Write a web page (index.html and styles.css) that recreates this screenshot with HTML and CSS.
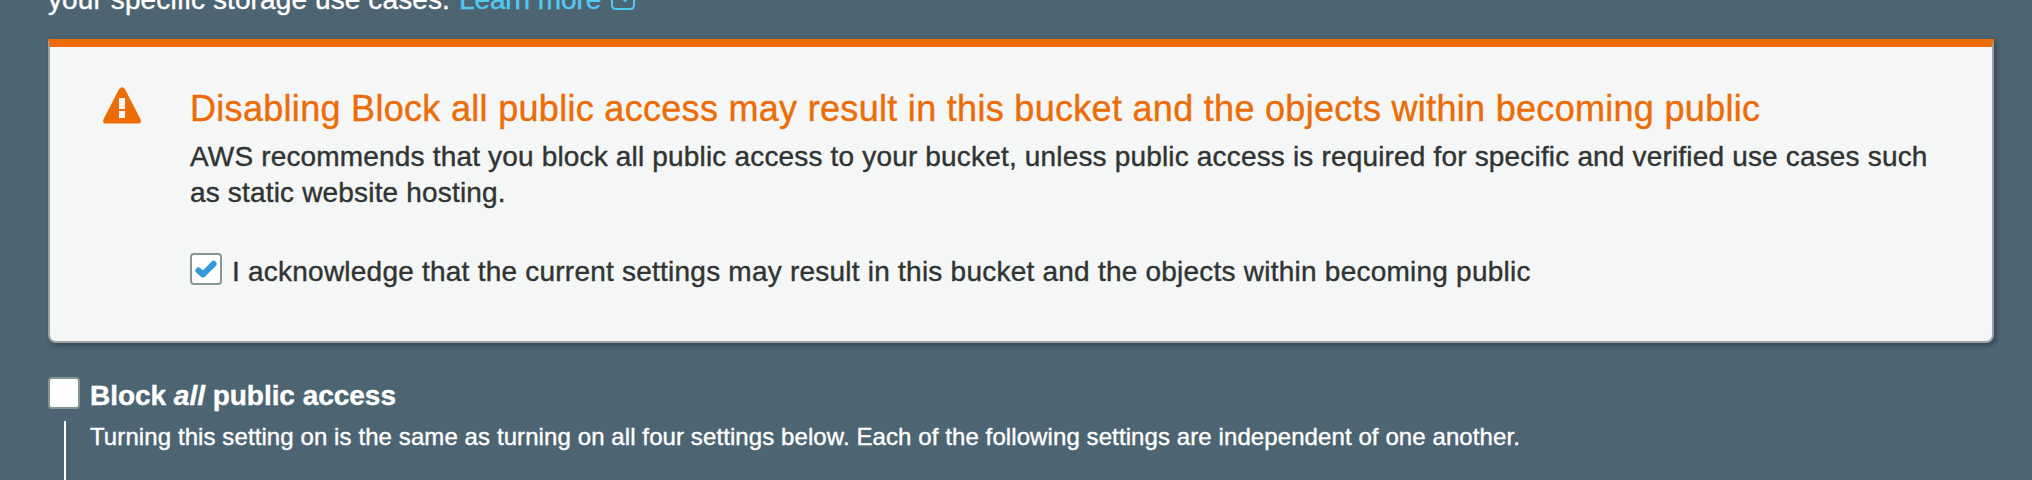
FILE: index.html
```html
<!DOCTYPE html>
<html lang="en">
<head>
<meta charset="utf-8">
<title>Block public access</title>
<link rel="stylesheet" href="styles.css">
</head>
<body>
<main class="page">
  <p class="intro"><span class="intro-text">your specific storage use cases.</span> <a class="link">Learn more</a><svg class="external" width="24" height="26" viewBox="0 0 24 26" fill="none" stroke="currentColor" stroke-width="2"><path d="M8 3H5Q1 3 1 7V21Q1 25 5 25H19Q23 25 23 21V7Q23 3 19 3M14 2V16M11 13.5L14 17L18 13"/></svg></p>
  <section class="alert">
    <svg class="warning" width="40" height="37" viewBox="0 0 40 37"><path fill="#ec6c07" d="M17 2.2Q20-1.8 23 2.2L38.4 32Q40 36.5 36 36.5H4Q0 36.5 1.6 32Z"/><path fill="#f5f7f6" d="M17 11h6v11h-6zM17 24h6v7h-6z"/></svg>
    <div class="content">
      <h2 class="title">Disabling Block all public access may result in this bucket and the objects within becoming public</h2>
      <p class="body"><span class="line-one">AWS recommends that you block all public access to your bucket, unless public access is required for specific and verified use cases such</span> <br><span class="line-two">as static website hosting.</span></p>
      <label class="ack"><span class="box"><svg width="22" height="18" viewBox="0 0 22 18" fill="none" stroke="#3399d9" stroke-width="6" stroke-linecap="round" stroke-linejoin="round"><path d="M3.4 10.4L8 14.5L18.6 3.8"/></svg></span><span class="ack-text">I acknowledge that the current settings may result in this bucket and the objects within becoming public</span></label>
    </div>
  </section>
  <label class="block-all"><span class="box"></span><span class="block-text">Block <em>all</em> public access</span></label>
  <div class="details"><p class="description">Turning this setting on is the same as turning on all four settings below. Each of the following settings are independent of one another.</p></div>
</main>
</body>
</html>
```
FILE: styles.css
```css
* { box-sizing: border-box; }
body { margin: 0; background: #4d6472; font-family: "Liberation Sans", Arial, sans-serif; font-size: 28px; color: #303433; -webkit-text-stroke: .4px currentColor; }
p, h2 { margin: 0; }
.page { height: 480px; padding: 0 38px 0 48px; overflow: hidden; white-space: nowrap; }
.intro { height: 39px; margin-top: -17px; margin-bottom: 17px; line-height: 34px; color: #fff; display: flex; align-items: flex-start; }
.intro-text { letter-spacing: .11px; }
.link { color: #51c9f1; margin-left: 9px; letter-spacing: -.1px; }
.external { color: #51c9f1; margin-left: 10px; margin-top: 1px; }
.alert { height: 304px; border: 2px solid #9da3a4; border-top: 8px solid #ec6c07; border-radius: 0 0 8px 8px; background: #f5f7f6; box-shadow: 2px 2px 5px rgba(0, 20, 30, .4); display: flex; align-items: flex-start; padding: 40px 52px 0; }
.warning { flex: none; margin-right: 48px; }
.title { font-size: 36px; font-weight: 400; line-height: 44px; color: #ec6c07; letter-spacing: .302px; }
.body { line-height: 36px; margin-top: 8px; letter-spacing: .172px; }
.ack { display: flex; align-items: center; height: 34px; margin-top: 41px; letter-spacing: .23px; }
.ack-text { padding-top: 6px; }
.box { flex: none; width: 32px; height: 32px; border: 2px solid #879596; border-radius: 4px; background: #fff; display: flex; align-items: center; justify-content: center; margin-right: 10px; }
.block-all { display: flex; height: 34px; margin-top: 34px; color: #fff; font-weight: 700; line-height: 38px; letter-spacing: -.03px; }
.details { margin: 10px 0 0 16px; height: 60px; border-left: 2px solid #fff; padding-left: 24px; color: #fff; font-size: 24px; line-height: 32px; letter-spacing: .092px; }
```
